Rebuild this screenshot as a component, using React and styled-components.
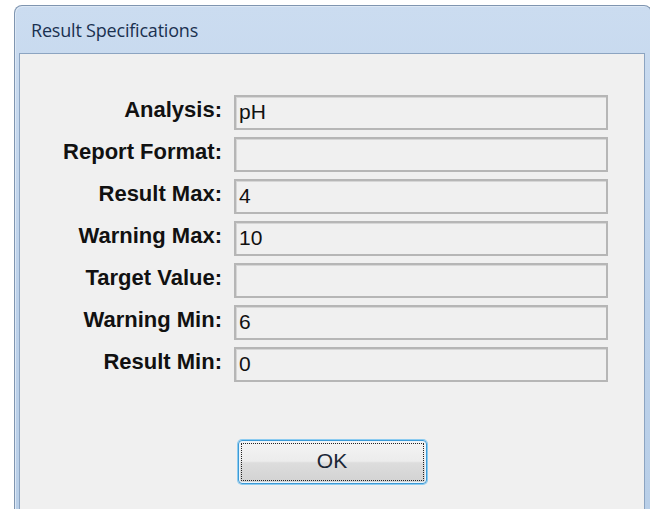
import React from "react";
import styled, { createGlobalStyle } from "styled-components";

const Global = createGlobalStyle`
  html, body {
    margin: 0;
    padding: 0;
    height: 100%;
    overflow: hidden;
    background: #ffffff;
  }
  #root {
    height: 100%;
  }
`;

const Desktop = styled.div`
  height: 100%;
  padding: 5px 0 0 14px;
  box-sizing: border-box;
  overflow: hidden;
`;

/* Aero-style window frame; its right and bottom edges run off the screen */
const Window = styled.div`
  width: 638px;
  height: 100%;
  box-sizing: border-box;
  display: flex;
  flex-direction: column;
  border: 1px solid #7f95b0;
  border-bottom: none;
  border-radius: 8px 8px 0 0;
  background: linear-gradient(#cbdcf0, #bcd1ea 60%, #b9cfe8);
  padding: 0 6px 0 4px;
  box-shadow: inset 1px 1px 0 #dde8f5;
`;

const TitleBar = styled.div`
  height: 47px;
  flex: none;
  display: flex;
  align-items: center;
  padding-left: 12px;
  font-family: "Open Sans", "Noto Sans", sans-serif;
  font-size: 18px;
  color: #1a3150;
  letter-spacing: -0.2px;
`;

const Client = styled.div`
  flex: 1;
  min-height: 0;
  background: #f0f0f0;
  border: 1px solid #8ca4c1;
  border-bottom: none;
  display: flex;
  flex-direction: column;
  align-items: flex-start;
  padding-top: 41px;
`;

const Form = styled.div`
  display: grid;
  grid-template-columns: 190px 374px;
  grid-auto-rows: 35px;
  column-gap: 12px;
  row-gap: 7px;
  padding-left: 12px;
`;

const Label = styled.label`
  font-family: "Liberation Sans", Arial, sans-serif;
  font-weight: bold;
  font-size: 22px;
  color: #111;
  text-align: right;
  align-self: center;
  white-space: nowrap;
  padding-bottom: 5px;
`;

const Field = styled.div`
  box-sizing: border-box;
  border: 2px solid #b6b6b6;
  box-shadow: inset 1px 1px 0 #d6d6d6;
  background: #f0f0f0;
  display: flex;
  align-items: center;
  padding: 0 0 1px 3px;
  font-family: "Liberation Sans", Arial, sans-serif;
  font-size: 21px;
  color: #111;
`;

const Footer = styled.div`
  align-self: stretch;
  display: flex;
  justify-content: center;
  padding-top: 58px;
`;

const Button = styled.button`
  width: 189px;
  height: 44px;
  box-sizing: border-box;
  border: 1px solid #3c9ad6;
  border-radius: 4px;
  box-shadow: 0 0 0 1px #8ccbf0, inset 0 0 0 1px #eaf4fb;
  background: linear-gradient(#f4f4f4, #ececec 48%, #dddddd 52%, #d2d2d2);
  outline: 1px dotted #222;
  outline-offset: -4px;
  font-family: "Liberation Sans", Arial, sans-serif;
  font-size: 21px;
  color: #1a2636;
  padding: 0 0 2px;
  cursor: pointer;
`;

const fields = [
  ["Analysis:", "pH"],
  ["Report Format:", ""],
  ["Result Max:", "4"],
  ["Warning Max:", "10"],
  ["Target Value:", ""],
  ["Warning Min:", "6"],
  ["Result Min:", "0"],
];

export default function App() {
  return (
    <>
      <Global />
      <Desktop>
        <Window>
          <TitleBar>Result Specifications</TitleBar>
          <Client>
            <Form>
              {fields.map(([label, value]) => (
                <React.Fragment key={label}>
                  <Label>{label}</Label>
                  <Field>{value}</Field>
                </React.Fragment>
              ))}
            </Form>
            <Footer>
              <Button>OK</Button>
            </Footer>
          </Client>
        </Window>
      </Desktop>
    </>
  );
}
